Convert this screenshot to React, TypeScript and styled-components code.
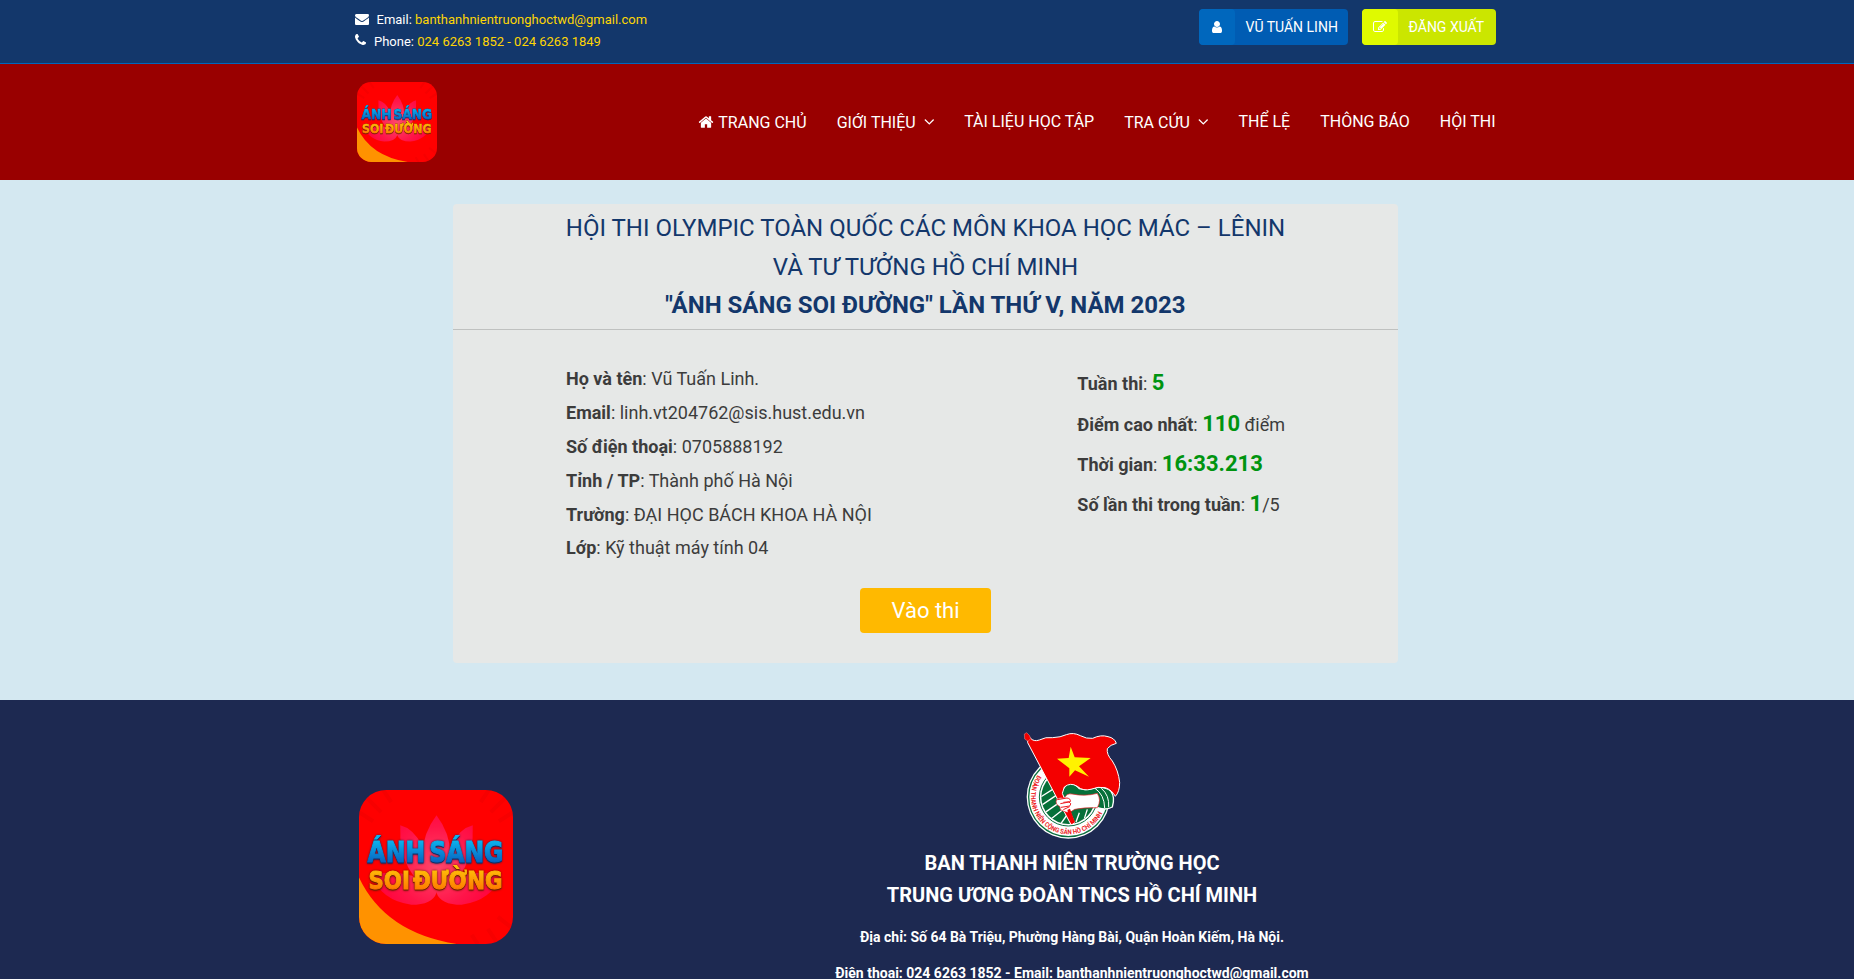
import React from "react";
import styled, { createGlobalStyle } from "styled-components";

const GlobalStyle = createGlobalStyle`
  *, *::before, *::after { box-sizing: border-box; }
  html { height: 100%; overflow: hidden; }
  body {
    margin: 0;
    height: 979px;
    overflow: hidden;
    background: #1d2951;
    color: #3c3c3c;
    font-family: Roboto, "Liberation Sans", sans-serif;
    font-size: 14px;
    line-height: 1.6;
  }
`;

const Page = styled.div`
  display: flex;
  flex-direction: column;
`;

const Container = styled.div`
  width: 1140px;
  margin-left: 355.5px;
  display: flex;
  justify-content: space-between;
`;

const TopBar = styled.div`
  height: 64px;
  background: #13376b;
  border-bottom: 1px solid #0066bc;
`;

const ContactList = styled.div`
  margin-left: -0.5px;
  padding-top: 9px;
  font-size: 13px;
  line-height: 22px;
  color: #fff;

  svg { position: relative; top: -1px; }
`;

const ContactRow = styled.div`
  display: flex;
  align-items: center;
  height: 22px;
`;

const ContactText = styled.span<{ $gap: number }>`
  margin-left: ${(p) => p.$gap}px;
  white-space: pre;
`;

const Highlight = styled.span`
  color: #fed504;
`;

const Actions = styled.div`
  display: flex;
  gap: 14px;
  padding-top: 9px;
`;

const ActionButton = styled.a<{ $bg: string; $width: number }>`
  display: flex;
  width: ${(p) => p.$width}px;
  height: 36px;
  border-radius: 4px;
  overflow: hidden;
  background: ${(p) => p.$bg};
  color: #fff;
  line-height: 36px;
  white-space: nowrap;
`;

const ActionIcon = styled.span<{ $bg: string }>`
  display: flex;
  align-items: center;
  justify-content: center;
  width: 36px;
  margin-right: 11px;
  border-radius: 4px;
  background: ${(p) => p.$bg};
`;

const Header = styled.header`
  height: 116px;
  background: #990000;
`;

const Brand = styled.div`
  padding: 18px 0 0 1.5px;
`;

const Nav = styled.nav`
  display: flex;
  gap: 30px;
  padding-top: 45px;
  font-size: 16px;
  line-height: 26px;
  color: #fff;
`;

const NavItem = styled.a<{ $lowered?: boolean }>`
  display: flex;
  align-items: center;
  gap: 4px;
  height: 26px;
  margin-top: ${(p) => (p.$lowered ? 1 : 0)}px;
  white-space: nowrap;

  svg { position: relative; top: -1.5px; }
`;

const MenuLabel = styled.span`
  margin-right: 4px;
`;

const Main = styled.main`
  height: 520px;
  padding: 24px 0 0 453px;
  background: #d4e8f1;
`;

const Card = styled.section`
  width: 945px;
  height: 459px;
  border-radius: 4px;
  background: #e6e8e7;
`;

const CardTitle = styled.div`
  padding: 5.4px 0 4.6px;
  border-bottom: 1px solid #bfc1c0;
  color: #13376b;
  font-size: 24px;
  line-height: 38.4px;
  text-align: center;
`;

const CardBody = styled.div`
  display: flex;
  justify-content: space-between;
  width: 719px;
  margin: 35.15px auto 0;
  font-size: 18px;
`;

const InfoColumn = styled.div`
  min-width: 207px;
`;

const InfoRow = styled.div`
  margin-bottom: 5px;
  white-space: nowrap;
`;

const Score = styled.b`
  color: #009410;
  font-size: 22px;
`;

const StartButton = styled.button`
  display: block;
  width: 131px;
  height: 45px;
  margin: 19.85px auto 0;
  padding: 0;
  border: 0;
  border-radius: 4px;
  background: #ffb900;
  color: #fff;
  font: 22px Roboto, sans-serif;
`;

const Footer = styled.footer`
  height: 279px;
  overflow: hidden;
  background: #1d2951;
  color: #fff;
`;

const FooterBrand = styled.div`
  padding: 90px 0 0 3px;
`;

const Organisation = styled.div`
  display: flex;
  flex-direction: column;
  align-items: center;
  width: 847px;
  padding-top: 32px;
  font-weight: 700;
  white-space: nowrap;
`;

const OrgName = styled.div`
  margin-top: 7px;
  font-size: 20px;
  line-height: 32px;
  text-align: center;
`;

const OrgLine = styled.div`
  margin-top: 14px;
  font-size: 14px;
  line-height: 22.4px;

  ${OrgName} + & { margin-top: 15px; }
`;

const icons = {
  envelope:
    "M1792 710v794q0 66-47 113t-113 47h-1472q-66 0-113-47t-47-113v-794q44 49 101 87 362 246 497 345 57 42 92.5 65.5t94.5 48 110 24.5h2q51 0 110-24.5t94.5-48 92.5-65.5q170-123 498-345 57-39 100-87zm0-294q0 79-49 151t-122 123q-376 261-468 325-10 7-42.5 31t-54 38.5-52 32.5-57.5 27-50 9h-2q-23 0-50-9t-57.5-27-52-32.5-54-38.5-42.5-31q-91-64-262-182.5t-205-142.5q-62-42-117-115.5t-55-136.5q0-78 41.5-130t118.5-52h1472q65 0 112.5 47t47.5 113z",
  phone:
    "M1600 1240q0 27-10 70.5t-21 68.5q-21 50-122 106-94 51-186 51-27 0-53-3.5t-57.5-12.5-47-14.5-55.5-20.5-49-18q-98-35-175-83-127-79-264-216t-216-264q-48-77-83-175-3-9-18-49t-20.5-55.5-14.5-47-12.5-57.5-3.5-53q0-92 51-186 56-101 106-122 25-11 68.5-21t70.5-10q14 0 21 3 18 6 53 76 11 19 30 54t35 63.5 31 53.5q3 4 17.5 25t21.5 35.5 7 28.5q0 20-28.5 50t-62 55-62 53-28.5 46q0 9 5 22.5t8.5 20.5 14 24 11.5 19q76 137 174 235t235 174q2 1 19 11.5t24 14 20.5 8.5 22.5 5q18 0 46-28.5t53-62 55-62 50-28.5q14 0 28.5 7t35.5 21.5 25 17.5q25 15 53.5 31t63.5 35 54 30q70 35 76 53 3 7 3 21z",
  home:
    "M1472 992v480q0 26-19 45t-45 19h-384v-384h-256v384h-384q-26 0-45-19t-19-45v-480q0-1 .5-3t.5-3l575-474 575 474q1 2 1 6zm223-69l-62 74q-8 9-21 11h-3q-13 0-21-7l-692-577-692 577q-12 8-24 7-13-2-21-11l-62-74q-8-10-7-23.5t11-21.5l719-599q32-26 76-26t76 26l244 204v-195q0-14 9-23t23-9h192q14 0 23 9t9 23v408l219 182q10 8 11 21.5t-7 23.5z",
  user:
    "M1536 1399q0 109-62.5 187t-150.5 78h-854q-88 0-150.5-78t-62.5-187q0-85 8.5-160.5t31.5-152 58.5-131 94-89 134.5-34.5q131 128 313 128t313-128q76 0 134.5 34.5t94 89 58.5 131 31.5 152 8.5 160.5zm-256-887q0 159-112.5 271.5t-271.5 112.5-271.5-112.5-112.5-271.5 112.5-271.5 271.5-112.5 271.5 112.5 112.5 271.5z",
  edit:
    "M888 1184l116-116-152-152-116 116v56h96v96h56zm440-720q-16-16-33 1l-350 350q-17 17-1 33t33-1l350-350q17-17 1-33zm80 594v190q0 119-84.5 203.5t-203.5 84.5h-832q-119 0-203.5-84.5t-84.5-203.5v-832q0-119 84.5-203.5t203.5-84.5h832q63 0 117 25 15 7 18 23 3 17-9 29l-49 49q-14 14-32 8-23-6-45-6h-832q-66 0-113 47t-47 113v832q0 66 47 113t113 47h832q66 0 113-47t47-113v-126q0-13 9-22l64-64q15-15 35-7t20 29zm-96-738l288 288-672 672h-288v-288zm444 132l-92 92-288-288 92-92q28-28 68-28t68 28l152 152q28 28 28 68t-28 68z",
  angleDown:
    "M1395 736q0 13-10 23l-466 466q-10 10-23 10t-23-10l-466-466q-10-10-10-23t10-23l50-50q10-10 23-10t23 10l393 393 393-393q10-10 23-10t23 10l50 50q10 10 10 23z",
};

type IconProps = { name: keyof typeof icons; size: number; box?: string; width?: number };

function Icon({ name, size, box = "0 0 1792 1792", width }: IconProps) {
  return (
    <svg width={width ?? size} height={size} viewBox={box} fill="currentColor" aria-hidden="true">
      <path d={icons[name]} />
    </svg>
  );
}

function Chevron() {
  return <Icon name="angleDown" size={17} width={10.5} box="340 0 1107 1792" />;
}

const LogoSvg = styled.svg`
  display: block;
  overflow: visible;
`;

const BlueWord = styled.text`
  font: 700 28px "DejaVu Sans", sans-serif;
  word-spacing: -5px;
  filter: drop-shadow(0 1.5px 0.3px #102f65) drop-shadow(0 0 1px #30204a);
`;

const GoldWord = styled.text`
  font: 700 25px "DejaVu Sans", sans-serif;
  word-spacing: -5px;
  filter: drop-shadow(0 1.5px 0.3px #6f2200) drop-shadow(0 0 1px #701800);
`;

function BrandLogo({ size, id }: { size: number; id: string }) {
  return (
    <LogoSvg width={size} height={size} viewBox="0 0 153 153">
      <defs>
        <linearGradient id={`${id}-blue`} gradientUnits="userSpaceOnUse" x1="0" y1="50" x2="0" y2="72">
          <stop offset="0" stopColor="#0cb4ee" />
          <stop offset="1" stopColor="#0862c0" />
        </linearGradient>
        <linearGradient id={`${id}-gold`} gradientUnits="userSpaceOnUse" x1="0" y1="79" x2="0" y2="99">
          <stop offset="0" stopColor="#ffbe08" />
          <stop offset="1" stopColor="#ff7a00" />
        </linearGradient>
        <radialGradient id={`${id}-petal`} gradientUnits="userSpaceOnUse" cx="77" cy="76" r="66">
          <stop offset="0" stopColor="#ff5a86" />
          <stop offset="0.6" stopColor="#ff1a5c" />
          <stop offset="1" stopColor="#ff0048" />
        </radialGradient>
        <clipPath id={`${id}-clip`}>
          <rect width="153" height="153" rx="27" />
        </clipPath>
      </defs>
      <g clipPath={`url(#${id}-clip)`}>
        <rect width="153" height="153" fill="#ff0000" />
        <g stroke="#d80000" strokeWidth="4" opacity="0.22">
          <path d="M0 22 14 31M8 8 22 22M24 0 32 12M129 0 121 12M145 8 131 22M153 22 139 31M112 144 118 153M128 138 138 153M138 126 153 138" />
        </g>
        <g fill={`url(#${id}-petal)`} opacity="0.8">
          <path d="M41 35Q66 41 77 102Q39 86 41 35Z" />
          <path d="M113 35Q88 41 77 102Q115 86 113 35Z" />
          <path d="M77 25Q104 61 77 102Q50 61 77 25Z" />
          <path d="M12 84Q56 76 77 102Q73 114 52 114Q22 110 12 84Z" />
          <path d="M142 84Q98 76 77 102Q81 114 102 114Q132 110 142 84Z" />
        </g>
        <path d="M0 87Q26 142 97 153H0Z" fill="#ff9200" />
      </g>
      <BlueWord x="8.5" y="71.5" textLength="135" lengthAdjust="spacingAndGlyphs" fill={`url(#${id}-blue)`} stroke={`url(#${id}-blue)`} strokeWidth="1">
        ÁNH SÁNG
      </BlueWord>
      <GoldWord x="9.5" y="98" textLength="133" lengthAdjust="spacingAndGlyphs" fill={`url(#${id}-gold)`} stroke={`url(#${id}-gold)`} strokeWidth="1">
        SOI ĐƯỜNG
      </GoldWord>
    </LogoSvg>
  );
}

function UnionEmblem() {
  return (
    <LogoSvg width="98" height="108" viewBox="69 36 294 324">
      <defs>
        <path id="ring-text" d="M117 160A113 113 0 1 0 309 276" />
        <clipPath id="field">
          <circle cx="205" cy="231" r="81" />
        </clipPath>
      </defs>
      <circle cx="205" cy="231" r="125" fill="#fff" />
      <circle cx="205" cy="231" r="119" fill="none" stroke="#0b7040" strokeWidth="4" />
      <circle cx="205" cy="231" r="87" fill="none" stroke="#0b7040" strokeWidth="3" />
      <g clipPath="url(#field)">
        <rect x="120" y="140" width="170" height="175" fill="#067039" />
        <path d="M120 232 176 197M124 256 182 217M130 281 178 248M152 298 190 268M182 312 203 282M228 306 238 278M253 296 262 268M278 282 284 262" stroke="#fff" strokeWidth="4" />
      </g>
      <text fill="#ed1c24" fontFamily="Roboto, sans-serif" fontSize="20" fontWeight="700">
        <textPath href="#ring-text" startOffset="6" textLength="372" lengthAdjust="spacingAndGlyphs">ĐOÀN THANH NIÊN CỘNG SẢN HỒ CHÍ MINH</textPath>
      </text>
      <path d="M178 222 202 190Q225 188 238 206Q260 212 285 203Q318 199 333 214Q346 232 337 261Q320 271 296 264L250 235 200 238Z" fill="#067039" stroke="#fff" strokeWidth="4" />
      <path d="M285 205Q313 224 314 264M304 205Q329 226 326 262" fill="none" stroke="#fff" strokeWidth="3" />
      <path
        d="M83 62 91 54Q101 66 118 60 137 50 158 53 182 52 199 44 220 36 241 47 259 57 278 55 303 43 324 50 344 54 349 70 331 74 322 86 319 103 337 123 355 151 359 187 359 216 346 229 336 210 316 203 292 199 276 207 249 215 232 199 211 186 193 201L187 220 224 309 213 314 83 68Z"
        fill="#f40000"
        stroke="#fff"
        strokeWidth="3"
        strokeLinejoin="round"
      />
      <path d="M73 42 80 38Q91 46 92 56L84 64 74 57Z" fill="#f40000" stroke="#d99" strokeWidth="1.5" />
      <path d="M212 80 224 112 272 114 237 139 267 170 225 151 208 170 208 145 171 116 206 114Z" fill="#fff200" />
      <path d="M170 238Q179 231 193 235Q200 219 216 222Q256 230 292 220Q305 241 292 263Q252 262 224 268Q207 282 191 274Q177 270 180 260Q164 253 170 238Z" fill="#fff" stroke="#ed1c24" strokeWidth="2" />
      <path d="M172 239 201 234Q213 236 211 245L190 247M181 251 207 246Q217 251 209 258L183 262M190 269 209 260" fill="none" stroke="#ed1c24" strokeWidth="3" />
      <path d="M202 270 216 311 225 307 210 266Z" fill="#f40000" />
    </LogoSvg>
  );
}

function App() {
  return (
    <Page>
      <GlobalStyle />
      <TopBar>
        <Container>
          <ContactList>
            <ContactRow>
              <Icon name="envelope" size={14} />
              <ContactText $gap={7.5}>Email: <Highlight>banthanhnientruonghoctwd@gmail.com</Highlight></ContactText>
            </ContactRow>
            <ContactRow>
              <Icon name="phone" size={14} width={11} box="192 128 1408 1792" />
              <ContactText $gap={8}>Phone: <Highlight>024 6263 1852 - 024 6263 1849</Highlight></ContactText>
            </ContactRow>
          </ContactList>
          <Actions>
            <ActionButton $bg="#005cb3" $width={149}>
              <ActionIcon $bg="#0067bd"><Icon name="user" size={14} /></ActionIcon>
              VŨ TUẤN LINH
            </ActionButton>
            <ActionButton $bg="#cbe600" $width={134}>
              <ActionIcon $bg="#dffa00"><Icon name="edit" size={14} /></ActionIcon>
              ĐĂNG XUẤT
            </ActionButton>
          </Actions>
        </Container>
      </TopBar>
      <Header>
        <Container>
          <Brand><BrandLogo size={80} id="header-logo" /></Brand>
          <Nav>
            <NavItem $lowered><Icon name="home" size={16} />TRANG CHỦ</NavItem>
            <NavItem $lowered><MenuLabel>GIỚI THIỆU</MenuLabel><Chevron /></NavItem>
            <NavItem>TÀI LIỆU HỌC TẬP</NavItem>
            <NavItem $lowered><MenuLabel>TRA CỨU</MenuLabel><Chevron /></NavItem>
            <NavItem>THỂ LỆ</NavItem>
            <NavItem>THÔNG BÁO</NavItem>
            <NavItem>HỘI THI</NavItem>
          </Nav>
        </Container>
      </Header>
      <Main>
        <Card>
          <CardTitle>
            HỘI THI OLYMPIC TOÀN QUỐC CÁC MÔN KHOA HỌC MÁC – LÊNIN
            <br />
            VÀ TƯ TƯỞNG HỒ CHÍ MINH
            <br />
            <b>"ÁNH SÁNG SOI ĐƯỜNG" LẦN THỨ V, NĂM 2023</b>
          </CardTitle>
          <CardBody>
            <InfoColumn>
              <InfoRow><b>Họ và tên</b>: Vũ Tuấn Linh.</InfoRow>
              <InfoRow><b>Email</b>: linh.vt204762@sis.hust.edu.vn</InfoRow>
              <InfoRow><b>Số điện thoại</b>: 0705888192</InfoRow>
              <InfoRow><b>Tỉnh / TP</b>: Thành phố Hà Nội</InfoRow>
              <InfoRow><b>Trường</b>: ĐẠI HỌC BÁCH KHOA HÀ NỘI</InfoRow>
              <InfoRow><b>Lớp</b>: Kỹ thuật máy tính 04</InfoRow>
            </InfoColumn>
            <InfoColumn>
              <InfoRow><b>Tuần thi</b>: <Score>5</Score></InfoRow>
              <InfoRow><b>Điểm cao nhất</b>: <Score>110</Score> điểm</InfoRow>
              <InfoRow><b>Thời gian</b>: <Score>16:33.213</Score></InfoRow>
              <InfoRow><b>Số lần thi trong tuần</b>: <Score>1</Score>/5</InfoRow>
            </InfoColumn>
          </CardBody>
          <StartButton>Vào thi</StartButton>
        </Card>
      </Main>
      <Footer>
        <Container>
          <FooterBrand><BrandLogo size={154} id="footer-logo" /></FooterBrand>
          <Organisation>
            <UnionEmblem />
            <OrgName>
              BAN THANH NIÊN TRƯỜNG HỌC
              <br />
              TRUNG ƯƠNG ĐOÀN TNCS HỒ CHÍ MINH
            </OrgName>
            <OrgLine>Địa chỉ: Số 64 Bà Triệu, Phường Hàng Bài, Quận Hoàn Kiếm, Hà Nội.</OrgLine>
            <OrgLine>Điện thoại: 024 6263 1852 - Email: banthanhnientruonghoctwd@gmail.com</OrgLine>
          </Organisation>
        </Container>
      </Footer>
    </Page>
  );
}

export default App;
